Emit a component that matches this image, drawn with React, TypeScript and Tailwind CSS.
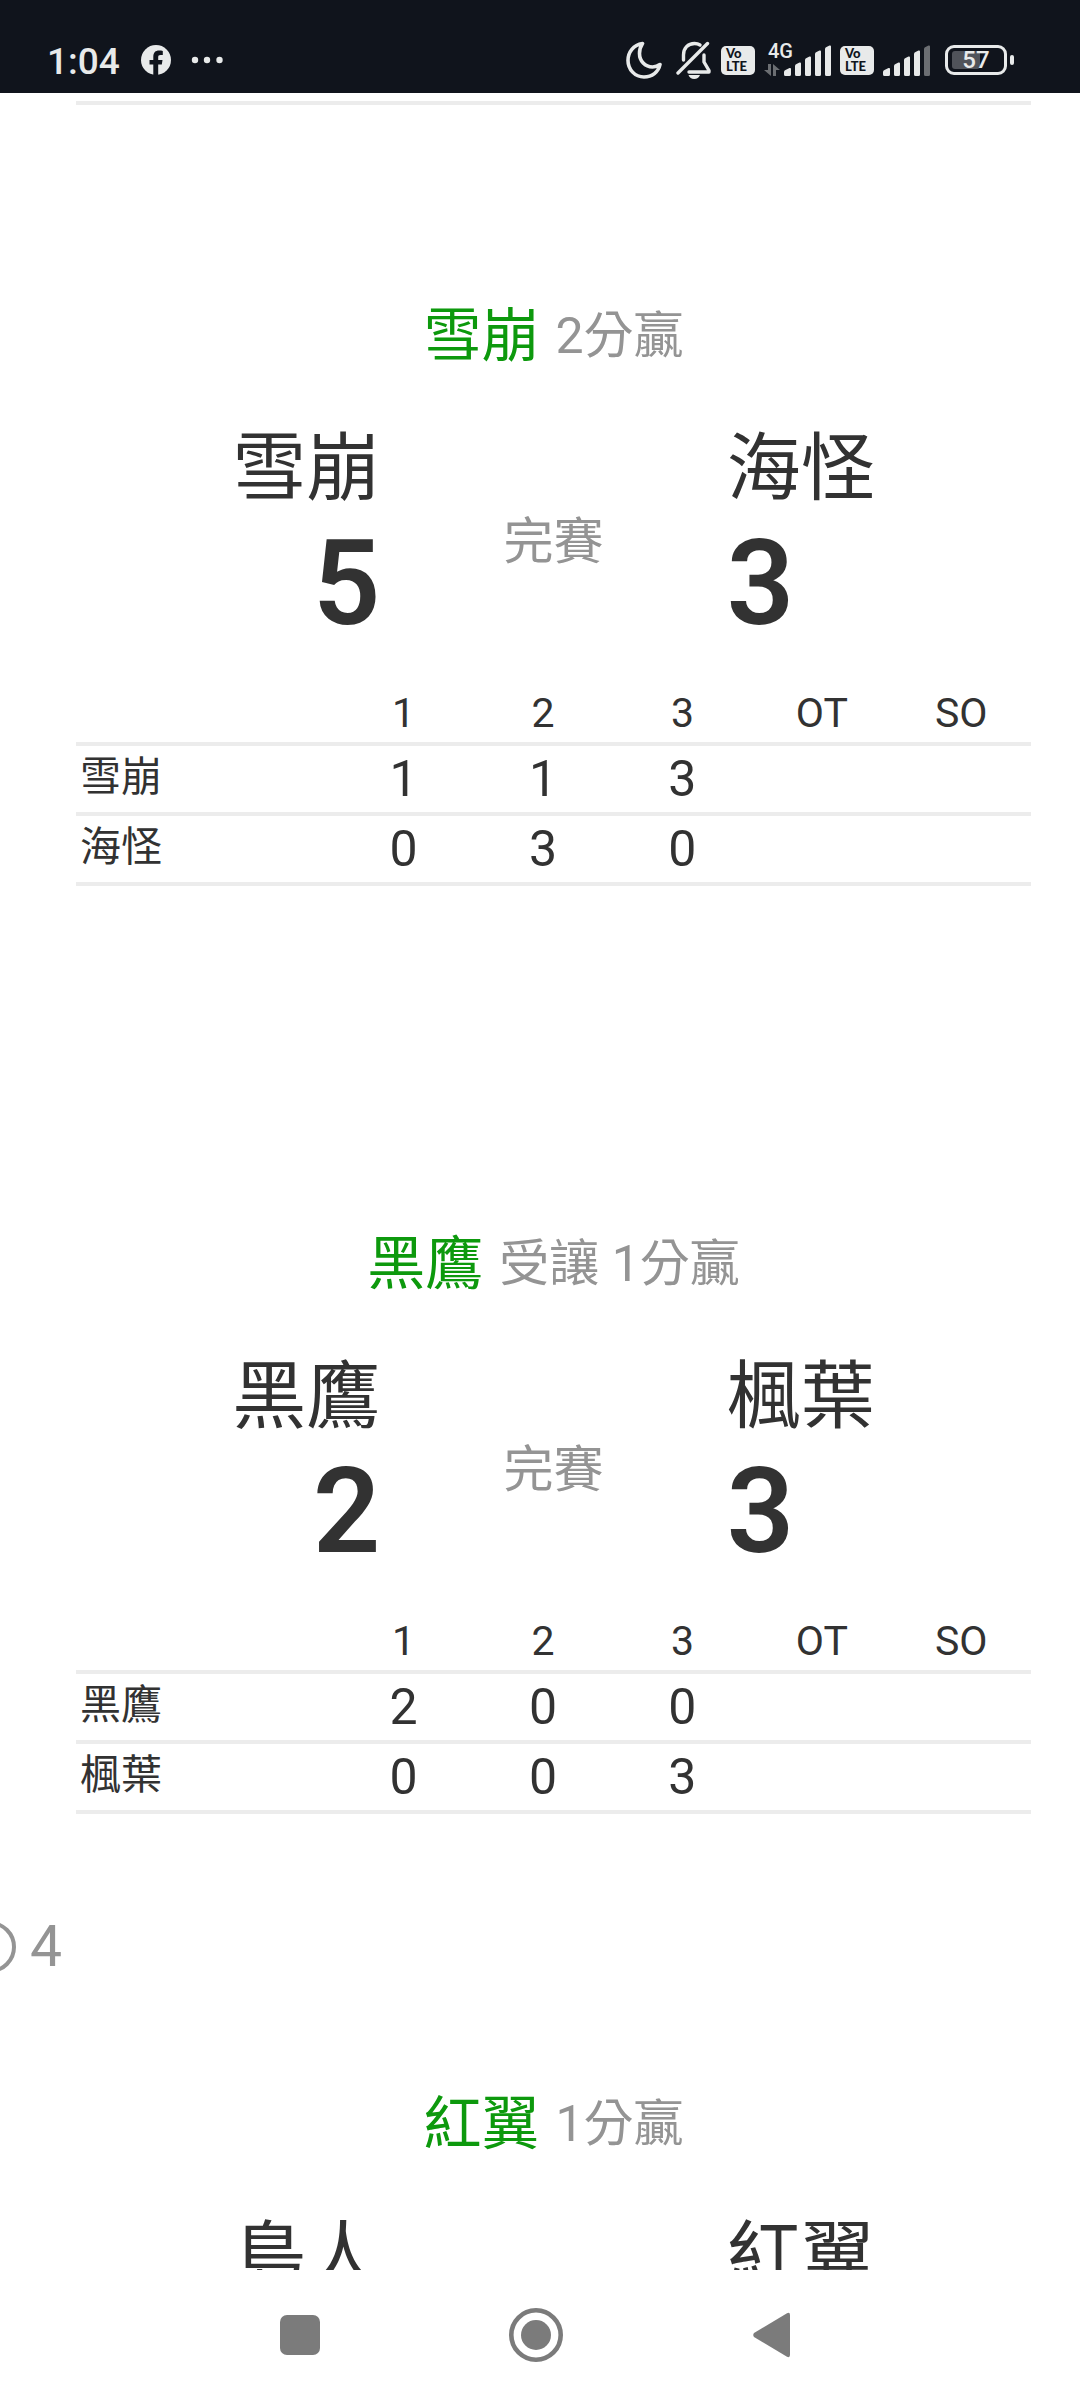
import React from "react";

interface ITeam {
  name: string;
  score: number;
  periods: string[];
}

interface IMatch {
  winner: string;
  note: string;
  teams: [ITeam, ITeam];
  comments?: number;
}

const columns = ["1", "2", "3", "OT", "SO"];

const matches: IMatch[] = [
  {
    winner: "雪崩",
    note: "2分贏",
    teams: [
      { name: "雪崩", score: 5, periods: ["1", "1", "3", "", ""] },
      { name: "海怪", score: 3, periods: ["0", "3", "0", "", ""] },
    ],
  },
  {
    winner: "黑鷹",
    note: "受讓 1分贏",
    teams: [
      { name: "黑鷹", score: 2, periods: ["2", "0", "0", "", ""] },
      { name: "楓葉", score: 3, periods: ["0", "0", "3", "", ""] },
    ],
    comments: 4,
  },
];

const MoonIcon: React.FC = () => (
  <svg width="36" height="38" viewBox="0 0 36 38" fill="none">
    <path
      d="M16.5 2.5C7.5 4 2 11 2 19.5C2 28.500 9 36 18 36C26 36 32.500 31 34 23.500C31.500 25.500 29 26 26.500 26C19 26 13.500 20 13.500 12.500C13.500 8.500 14.500 5.500 16.500 2.500Z"
      stroke="#e8eaea"
      strokeWidth="3.6"
      strokeLinejoin="round"
    />
  </svg>
);

const BellOffIcon: React.FC = () => (
  <svg width="36" height="38" viewBox="0 0 36 38" fill="none">
    <g stroke="#e8eaea" strokeWidth="3.4" strokeLinecap="round" strokeLinejoin="round">
      <path d="M2 32L31.500 2.500" />
      <path d="M7.500 19V14C7.500 7 12 2.500 18.500 2.500C20.500 2.500 22.500 3 24 4" />
      <path d="M28 14V21L33 29.500V31H13" />
    </g>
    <path d="M12.500 34H24C23 36.800 21 38 18.200 38C15.400 38 13.500 36.800 12.500 34Z" fill="#e8eaea" />
  </svg>
);

const VolteIcon: React.FC = () => (
  <span className="flex h-[29px] w-[34px] flex-col justify-center rounded-[5px] bg-[#e8eaea] pl-[5px] font-[Lato,sans-serif] text-[13px] leading-[13px] font-black text-[#10141c]">
    <span>Vo</span>
    <span>LTE</span>
  </span>
);

const SignalBars: React.FC<{ faded?: boolean }> = ({ faded }) => (
  <svg width="48" height="31" viewBox="0 0 48 31" fill="#e8eaea">
    <path d="M0 27Q0 25.500 1.500 25L5.500 23Q7 22.500 7 24V29.500Q7 31 5.500 31H1.500Q0 31 0 29.500Z" />
    <path d="M11 21Q11 19.500 12.500 19L15.500 17.500Q17 17 17 18.500V29.500Q17 31 15.500 31H12.500Q11 31 11 29.500Z" />
    <path d="M21 15Q21 13.500 22.500 13L25.500 11.500Q27 11 27 12.500V29.500Q27 31 25.500 31H22.500Q21 31 21 29.500Z" />
    <path d="M31 9Q31 7.500 32.500 7L35.500 5.500Q37 5 37 6.500V29.500Q37 31 35.500 31H32.500Q31 31 31 29.500Z" />
    <path
      d="M41 4Q41 2.500 42.500 2L45.500 .5Q47 0 47 1.500V29.500Q47 31 45.500 31H42.500Q41 31 41 29.500Z"
      fill={faded ? "#6b6e72" : "#e8eaea"}
    />
  </svg>
);

const StatusBar: React.FC = () => (
  <header className="flex h-[93px] shrink-0 items-start justify-between bg-[#10141c] pt-[41px] pr-[66px] pl-[47px] text-[#e8eaea]">
    <div className="flex h-[38px] items-center">
      <span className="pt-1 text-[37px] leading-[38px] font-medium">1:04</span>
      <svg className="ml-[21px]" width="30" height="30" viewBox="0 0 30 30">
        <circle cx="15" cy="15" r="15" fill="#e8eaea" />
        <path
          d="M12.300 30V19.500H8.500V15H12.300V12C12.300 7.500 14.500 5.500 18 5.500C19.500 5.500 20.800 5.600 21.800 5.900V10H19.500C17.700 10 17.200 10.800 17.200 12.300V15H21.500L20.800 19.500H17.200V30Z"
          fill="#10141c"
        />
      </svg>
      <svg className="ml-5" width="32" height="8" viewBox="0 0 32 8" fill="#e8eaea">
        <circle cx="4" cy="4" r="3.200" />
        <circle cx="16" cy="4" r="3.200" />
        <circle cx="28.500" cy="4" r="3.200" />
      </svg>
    </div>
    <div className="flex h-[38px] items-center">
      <MoonIcon />
      <span className="ml-[14px]">
        <BellOffIcon />
      </span>
      <span className="ml-[9px]">
        <VolteIcon />
      </span>
      <span className="relative ml-[29px]">
        <SignalBars />
        <span className="absolute -top-[6px] -left-4 text-[20px] leading-6 font-medium">4G</span>
        <svg
          className="absolute top-[19px] -left-5"
          width="16"
          height="12"
          viewBox="0 0 16 12"
          fill="#6b6e72"
        >
          <path d="M4 0H7V12L0 6H4Z" />
          <path d="M9 12V0L16 6H12V12Z" />
        </svg>
      </span>
      <span className="ml-2">
        <VolteIcon />
      </span>
      <span className="ml-[9px]">
        <SignalBars faded />
      </span>
      <span className="relative ml-[14px] flex h-[30px] w-[62px] items-center justify-center rounded-[9px] border-3 border-[#e8eaea]">
        <span className="absolute inset-y-[3px] left-1 w-7 rounded-[3px] bg-[#50535a]" />
        <span className="relative text-[24px] leading-6 font-medium">57</span>
      </span>
      <span className="ml-[3px] h-[10px] w-1 rounded-[2px] bg-[#e8eaea]" />
    </div>
  </header>
);

const MatchTitle: React.FC<{ winner: string; note: string }> = ({ winner, note }) => (
  <h2 className="flex h-16 items-center justify-center gap-4 leading-[64px]">
    <span className="text-[58px] text-[#0d990d]">{winner}</span>
    <span className="text-[50px] text-[#949494]">{note}</span>
  </h2>
);

const TeamScore: React.FC<{ name: string; score: number; className: string }> = ({
  name,
  score,
  className,
}) => (
  <div className={className}>
    <p className="text-[74px] leading-[92px]">{name}</p>
    <p className="text-[118px] leading-[138px] font-semibold">{score}</p>
  </div>
);

const ScoreRow: React.FC<{ home: ITeam; away: ITeam }> = ({ home, away }) => (
  <div className="mt-[55px] grid grid-cols-3 items-center">
    <TeamScore name={home.name} score={home.score} className="pr-[14px] text-right" />
    <p className="pt-2 text-center text-[50px] leading-[60px] text-[#949494]">完賽</p>
    <TeamScore name={away.name} score={away.score} className="pl-[14px]" />
  </div>
);

const PeriodTable: React.FC<{ teams: ITeam[] }> = ({ teams }) => (
  <table className="mt-[31px] w-full table-fixed border-separate border-spacing-0">
    <thead>
      <tr className="h-[62px] text-[41px] leading-[48px]">
        <th className="w-[27%] border-b-4 border-[#ececec] p-0" />
        {columns.map((column) => (
          <th key={column} className="border-b-4 border-[#ececec] p-0 font-normal">
            {column}
          </th>
        ))}
      </tr>
    </thead>
    <tbody>
      {teams.map((team) => (
        <tr key={team.name} className="h-[70px]">
          <th className="border-b-4 border-[#ececec] p-0 pb-1 pl-1 text-left text-[41px] leading-[60px] font-normal">
            {team.name}
          </th>
          {team.periods.map((goals, i) => (
            <td
              key={i}
              className="border-b-4 border-[#ececec] p-0 text-center text-[50px] leading-[60px]"
            >
              {goals}
            </td>
          ))}
        </tr>
      ))}
    </tbody>
  </table>
);

const Match: React.FC<{ match: IMatch }> = ({ match }) => {
  const [home, away] = match.teams;
  return (
    <article>
      <div className="pr-[49px] pl-[76px]">
        <MatchTitle winner={match.winner} note={match.note} />
        <ScoreRow home={home} away={away} />
        <PeriodTable teams={match.teams} />
      </div>
      {match.comments ? (
        <div className="mt-[103px] mb-[115px] flex h-[60px] items-center gap-[14px] text-[57px] leading-[60px] text-[#949494]">
          <svg className="-ml-9" width="52" height="52" viewBox="0 0 52 52" fill="none">
            <circle cx="26" cy="26" r="24" stroke="#949494" strokeWidth="4" />
          </svg>
          <span>{match.comments}</span>
        </div>
      ) : (
        <div className="h-[346px]" />
      )}
    </article>
  );
};

const NavBar: React.FC = () => (
  <nav className="flex h-[130px] shrink-0 items-center justify-center bg-white pr-2 text-[#7b7b7b]">
    <button type="button" aria-label="Recent apps" className="flex w-[236px] justify-center">
      <span className="h-10 w-10 rounded-[7px] bg-current" />
    </button>
    <button type="button" aria-label="Home" className="flex w-[236px] justify-center">
      <svg width="54" height="54" viewBox="0 0 54 54">
        <circle cx="27" cy="27" r="24.700" fill="none" stroke="currentColor" strokeWidth="4.600" />
        <circle cx="27" cy="27" r="15" fill="currentColor" />
      </svg>
    </button>
    <button type="button" aria-label="Back" className="flex w-[236px] justify-center">
      <svg width="38" height="46" viewBox="0 0 38 46" fill="currentColor">
        <path d="M1 21L34 1.200Q37 0 37 3V43Q37 46 34 44.800L1 25Q-.5 23 1 21Z" />
      </svg>
    </button>
  </nav>
);

const App: React.FC = () => {
  return (
    <div className="flex h-screen flex-col bg-white font-[Roboto,'Noto_Sans_CJK_TC',sans-serif] text-[#323232]">
      <StatusBar />
      <main lang="zh-Hant" className="min-h-0 flex-1 overflow-hidden pt-2">
        <hr className="mr-[49px] mb-[199px] ml-[76px] border-t-4 border-[#ececec]" />
        {matches.map((match) => (
          <Match key={match.winner} match={match} />
        ))}
        <article className="pr-[49px] pl-[76px]">
          <MatchTitle winner="紅翼" note="1分贏" />
          <div className="mt-[55px] grid grid-cols-3 text-[74px] leading-[92px]">
            <p className="pr-[14px] text-right">島人</p>
            <p className="col-start-3 pl-[14px]">紅翼</p>
          </div>
        </article>
      </main>
      <NavBar />
    </div>
  );
};

export default App;
